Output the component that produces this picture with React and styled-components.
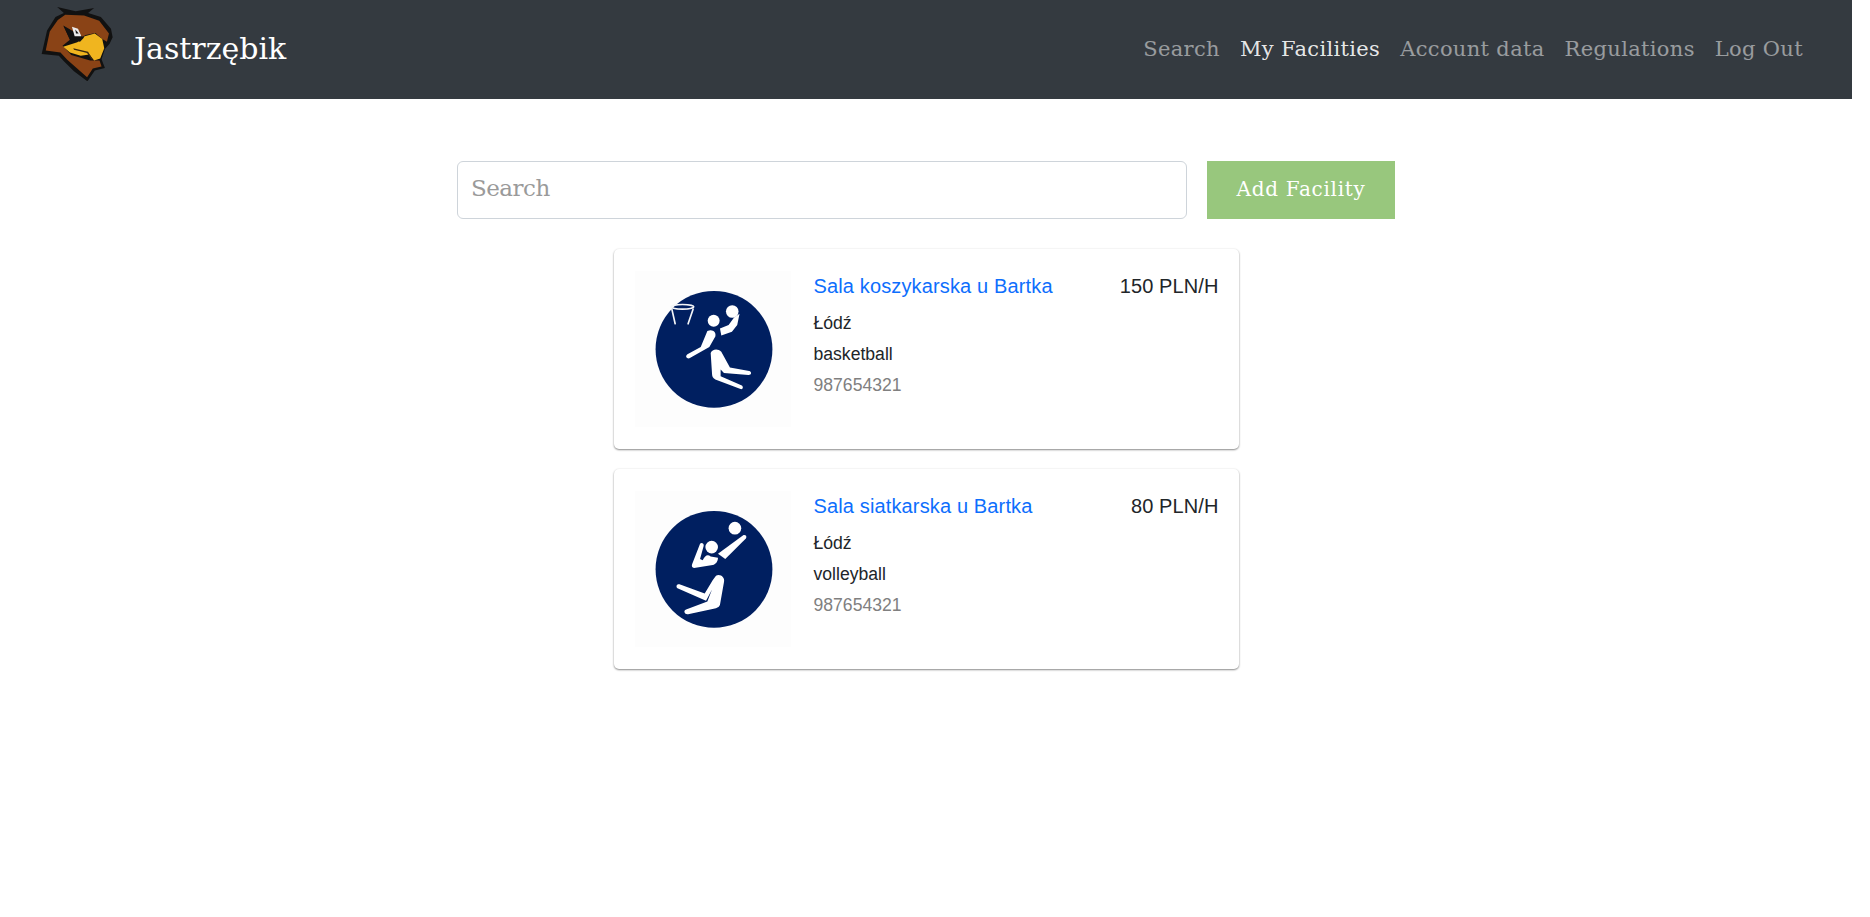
import React from 'react';
import styled, { createGlobalStyle } from 'styled-components';

const GlobalStyle = createGlobalStyle`
  html, body { margin: 0; padding: 0; background: #fff; }
  body { font-family: "Liberation Sans", Arial, sans-serif; color: #212529; }
  * { box-sizing: border-box; }
`
const serif = `"DejaVu Serif", "Liberation Serif", serif`;

const Page = styled.div`
  width: 1852px;
  min-height: 917px;
  background: #fff;
`
const NavBar = styled.nav`
  height: 99px;
  background: #343a40;
  display: flex;
  align-items: center;
  justify-content: space-between;
  padding: 0 49px 0 41px;
`
const Brand = styled.a`
  display: flex;
  align-items: center;
  gap: 21px;
  padding-bottom: 3px;
  color: #fff;
  font-family: ${serif};
  font-size: 30px;
  text-decoration: none;
`
const BrandMark = styled.svg`
  flex: none;
  margin-bottom: 9px;
`
const NavList = styled.div`
  display: flex;
  align-items: center;
  gap: 20px;
  padding-bottom: 2px;
`
const NavLink = styled.a`
  font-family: ${serif};
  font-size: 21px;
  letter-spacing: 0.33px;
  color: ${props => props.$active ? 'rgba(255,255,255,.9)' : 'rgba(255,255,255,.5)'};
  text-decoration: none;
`
const Main = styled.main`
  width: 938px;
  margin: 0 auto;
  padding-top: 62px;
  display: flex;
  flex-direction: column;
  align-items: center;
`
const SearchRow = styled.div`
  width: 938px;
  display: flex;
  gap: 20px;
  margin-bottom: 30px;
`
const SearchInput = styled.input`
  flex: 1;
  height: 58px;
  border: 1px solid #ced4da;
  border-radius: 6px;
  padding: 0 13px 4px;
  font-family: ${serif};
  font-size: 23px;
  letter-spacing: -0.5px;
  outline: none;
  &::placeholder { color: #9a9a9a; opacity: 1; }
`
const AddButton = styled.button`
  width: 188px;
  height: 58px;
  border: none;
  padding: 0 0 2px;
  background: #98c77d;
  color: #fff;
  font-family: ${serif};
  font-size: 20px;
  letter-spacing: 0.7px;
`
const CardList = styled.div`
  display: flex;
  flex-direction: column;
  gap: 20px;
`
const Card = styled.article`
  width: 625px;
  height: 200px;
  padding: 22px 20px 22px 21px;
  display: flex;
  gap: 23px;
  background: #fff;
  border-radius: 5px;
  box-shadow: 0 1px 2px rgba(0,0,0,.45), 0 0 3px rgba(0,0,0,.05);
`
const Thumb = styled.svg`
  flex: none;
  width: 156px;
  height: 156px;
  background: #fdfdfd;
`
const CardBody = styled.div`
  flex: 1;
  min-width: 0;
`
const CardHead = styled.div`
  display: flex;
  justify-content: space-between;
  align-items: center;
  height: 30px;
  margin-bottom: 7px;
`
const CardTitle = styled.a`
  color: #0d6efd;
  font-size: 20px;
  letter-spacing: 0.14px;
  text-decoration: none;
`
const Price = styled.span`
  font-size: 20px;
  letter-spacing: 0.1px;
  color: #212529;
`
const Line = styled.div`
  font-size: 17.6px;
  line-height: 31px;
  color: ${props => props.$muted ? '#808080' : '#212529'};
`

const Logo = () => (
  <BrandMark width="72" height="74" viewBox="33 25 212 220">
    <path fill="#111" d="M80 25 L135 38 L190 28 L172 43 L210 55 L240 90 L245 115 L236 134 L222 150 L212 180 L222 206 L192 214 L170 246 L130 216 L100 186 L85 170 L34 165 L50 95 L75 55 L100 43 Z" />
    <path fill="#8a4316" d="M104 48 L160 50 L205 66 L234 104 L228 128 L214 120 L194 102 L165 108 L152 116 L100 82 L118 122 L96 140 L122 168 L178 184 L206 184 L212 202 L186 208 L169 234 L110 182 L90 160 L46 154 L58 98 L82 64 Z" />
    <path fill="#f0b51f" d="M98 143 L140 130 L162 112 L192 104 L214 120 L220 148 L208 178 L190 184 L176 166 L150 170 L118 160 Z" />
    <path fill="#3a2a10" d="M128 148 L172 158 L186 182 L181 180 L169 162 L130 152 Z" />
    <path fill="#111" d="M98 80 L160 116 L148 128 L118 122 Z" />
    <path fill="#ececec" d="M124 84 L142 90 L152 112 L132 112 Z" />
    <path fill="#111" d="M134 92 L144 104 L136 104 Z" />
  </BrandMark>
)

const BasketballIcon = () => (
  <Thumb viewBox="72 75 470 470">
    <circle cx="310" cy="311" r="176" fill="#001f60" />
    <g fill="none" stroke="#f4f6f8" strokeWidth="5" strokeLinecap="round">
      <ellipse cx="215" cy="183" rx="34" ry="7" />
      <path d="M183 190 L193 234 M247 190 L232 234" />
    </g>
    <g fill="#fff">
      <circle cx="365" cy="197" r="19" />
      <circle cx="309" cy="225" r="18" />
      <path d="M370 216 L387 204 L380 238 L364 258 L332 269 L328 248 L354 238 Z" />
      <path d="M290 256 C304 248 318 258 314 272 L296 304 L236 338 C228 340 222 332 230 326 L270 304 Z" />
      <path d="M300 322 C304 310 322 308 332 318 L358 366 L416 376 C424 378 424 388 414 388 L340 382 L330 372 L330 392 L394 420 C400 426 396 434 388 430 L314 402 C306 398 304 392 304 384 Z" />
    </g>
  </Thumb>
)

const VolleyballIcon = () => (
  <Thumb viewBox="72 75 470 470">
    <circle cx="310" cy="311" r="176" fill="#001f60" />
    <g fill="#fff">
      <circle cx="373" cy="187" r="19" />
      <circle cx="303" cy="244" r="19" />
      <path d="M398 208 C406 206 410 212 406 218 L344 280 L322 264 Z" />
      <path d="M268 234 C272 230 280 232 279 240 L268 280 L276 284 C284 266 292 266 300 272 L322 276 C322 286 316 296 306 298 L250 307 C244 307 242 302 244 296 Z" />
      <path d="M316 330 C330 324 344 336 340 350 L328 418 C326 424 322 426 316 428 L232 446 C222 448 216 436 226 432 L290 408 L304 372 L286 406 L200 368 C194 362 198 354 206 356 L282 384 L306 344 Z" />
    </g>
  </Thumb>
)

const facilities = [
  { name: 'Sala koszykarska u Bartka', price: '150 PLN/H', city: 'Łódź', sport: 'basketball', phone: '987654321', Icon: BasketballIcon },
  { name: 'Sala siatkarska u Bartka', price: '80 PLN/H', city: 'Łódź', sport: 'volleyball', phone: '987654321', Icon: VolleyballIcon },
];

export default function App() {
  return (
    <Page>
      <GlobalStyle />
      <NavBar>
        <Brand href="#"><Logo />Jastrzębik</Brand>
        <NavList>
          <NavLink href="#">Search</NavLink>
          <NavLink href="#" $active>My Facilities</NavLink>
          <NavLink href="#">Account data</NavLink>
          <NavLink href="#">Regulations</NavLink>
          <NavLink href="#">Log Out</NavLink>
        </NavList>
      </NavBar>
      <Main>
        <SearchRow>
          <SearchInput placeholder="Search" />
          <AddButton>Add Facility</AddButton>
        </SearchRow>
        <CardList>
          {facilities.map(({ name, price, city, sport, phone, Icon }) => (
            <Card key={name}>
              <Icon />
              <CardBody>
                <CardHead>
                  <CardTitle href="#">{name}</CardTitle>
                  <Price>{price}</Price>
                </CardHead>
                <Line>{city}</Line>
                <Line>{sport}</Line>
                <Line $muted>{phone}</Line>
              </CardBody>
            </Card>
          ))}
        </CardList>
      </Main>
    </Page>
  )
}
